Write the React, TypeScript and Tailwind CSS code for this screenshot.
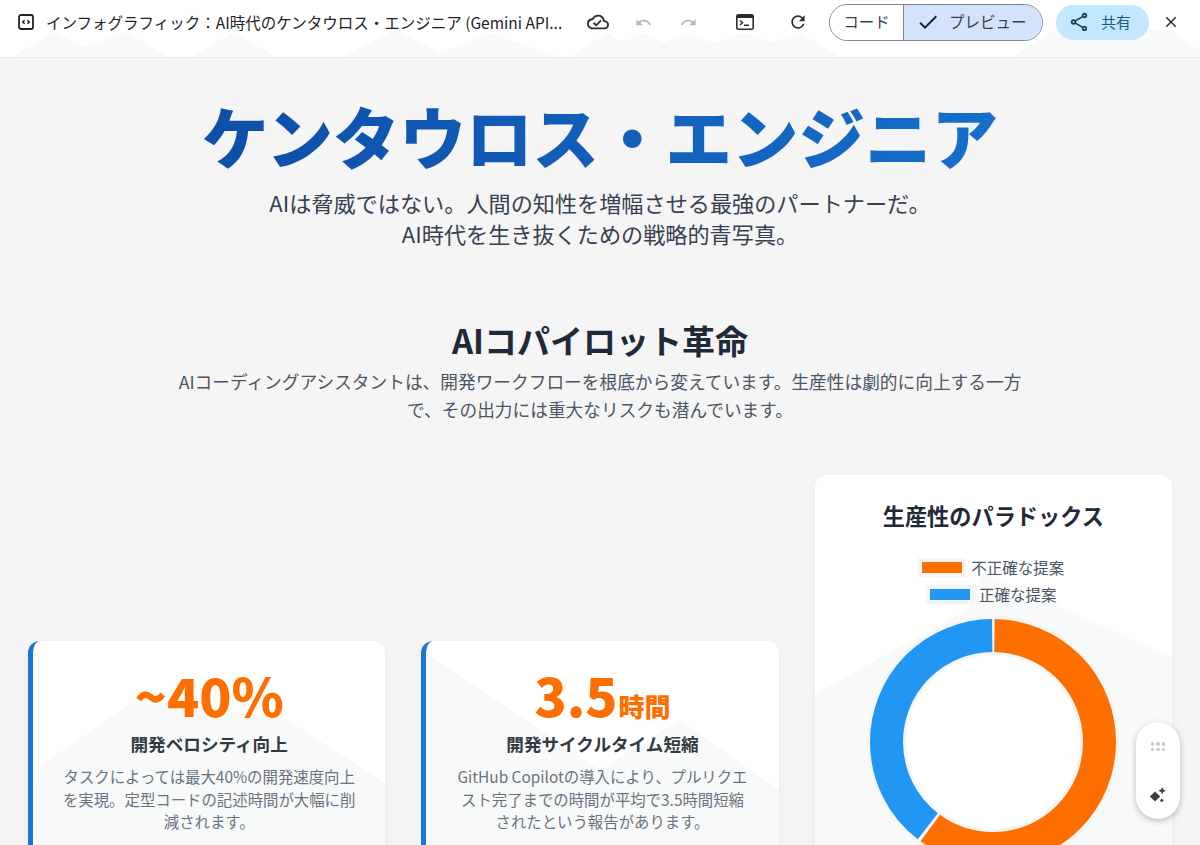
import React from 'react';
import { MdOutlineCloudDone, MdUndo, MdRedo, MdRefresh, MdCheck, MdOutlineShare, MdClose } from 'react-icons/md';

const jp = "font-['Noto_Sans_CJK_JP','Noto_Sans',sans-serif]";

function CodeIcon() {
  return (
    <svg width="18" height="18" viewBox="0 0 18 18" fill="none" stroke="#1f2328">
      <rect x="2" y="2" width="14" height="14" rx="2" strokeWidth="1.8" />
      <path d="M7.6 7.2 5.8 9l1.8 1.8M10.4 7.2 12.2 9l-1.8 1.8" strokeWidth="1.5" />
    </svg>
  );
}

function TerminalIcon() {
  return (
    <svg width="18" height="16" viewBox="0 0 18 16" fill="none">
      <rect x="0.8" y="0.8" width="16.4" height="14.4" rx="1.5" stroke="#2a2e33" strokeWidth="1.6" />
      <rect x="1" y="1" width="16" height="3" fill="#2a2e33" />
      <path d="m4 6.5 2.5 2.2L4 11M8 11.2h5" stroke="#2a2e33" strokeWidth="1.4" />
    </svg>
  );
}

function Sparkles() {
  return (
    <svg width="20" height="20" viewBox="0 0 20 20" fill="#3c4043">
      <path d="M7 5.5 12.2 10.5 7 15.6 1.8 10.5Z" />
      <path d="M14.2 1 15.3 3.6 18 4.8 15.3 6 14.2 8.6 13.1 6 10.4 4.8 13.1 3.6Z" />
      <path d="M13.8 12.5 15.7 14.4 13.8 16.3 11.9 14.4Z" />
    </svg>
  );
}

function Watermark({ points }: { points: string[] }) {
  return (
    <svg className="absolute inset-0 w-full h-full" preserveAspectRatio="none">
      {points.map((p) => (
        <polygon key={p} points={p} fill="#f8f9f9" />
      ))}
    </svg>
  );
}

function TopBar() {
  return (
    <header className="relative h-[58px] shrink-0 bg-white border-b border-[#ebebeb]">
      <Watermark
        points={[
          '12,57 54,32 85,47 126,32 169,57',
          '192,57 234,32 276,57',
          '341,57 395,30 441,53 490,33 559,57',
          '570,57 606,33 622,42 642,33 664,43 686,33 713,43 743,33 773,42 801,33 839,57',
          '1012,57 1060,27 1168,30 1200,50 1200,57',
        ]}
      />
      <div className={`relative flex items-center h-[44px] pl-[17px] pr-[19px] ${jp}`}>
        <CodeIcon />
        <span className="ml-[11px] w-[519px] text-[15.5px] leading-[20px] -mt-[1px] text-[#1f2328] whitespace-nowrap overflow-hidden">
          インフォグラフィック：AI時代のケンタウロス・エンジニア (Gemini API...
        </span>
        <MdOutlineCloudDone className="ml-[22px] text-[22px] text-[#2a2e33]" />
        <MdUndo className="ml-[26px] text-[17px] text-[#b4b6b8]" />
        <MdRedo className="ml-[28px] text-[17px] text-[#b4b6b8]" />
        <span className="ml-[39px]"><TerminalIcon /></span>
        <MdRefresh className="ml-[34px] text-[20px] text-[#2a2e33]" />
        <div className="ml-[21px] flex h-[37px] w-[214px] rounded-full border border-[#80868b] overflow-hidden text-[15.5px] text-[#3c4043]">
          <div className="w-[74px] bg-white flex items-center justify-center border-r border-[#80868b]">コード</div>
          <div className="flex-1 bg-[#d3e3fd] flex items-center pl-[12px]">
            <MdCheck className="text-[24px] text-[#1f2328]" />
            <span className="ml-[9px]">プレビュー</span>
          </div>
        </div>
        <div className="ml-[13px] flex items-center h-[35px] w-[93px] rounded-full bg-[#c2e7ff] pl-[12px] text-[15px] text-[#1a5a8a]">
          <MdOutlineShare className="text-[22px] text-[#0b3f66]" />
          <span className="ml-[11px]">共有</span>
        </div>
        <MdClose className="ml-[13px] text-[18px] text-[#2a2e33]" />
      </div>
    </header>
  );
}

function StatCard({ stat, unit, title, lines, mark }: { stat: string; unit?: string; title: string; lines: string; mark: string[] }) {
  return (
    <div className="relative mt-[166px] h-[300px] rounded-xl bg-white border-l-[5px] border-[#1976d2] shadow-[0_4px_12px_rgba(0,0,0,0.05)] overflow-hidden px-[24px] pt-[21px] text-center">
      <Watermark points={mark} />
      <div className="relative">
        <div className="h-[64px] text-[53px] leading-[64px] font-black text-[#ff6f00]">
          {stat}
          {unit && <span className="ml-[1px] text-[26px] leading-none font-black">{unit}</span>}
        </div>
        <h3 className="mt-[4px] text-[17.6px] leading-[28px] font-bold text-[#333a42]">{title}</h3>
        <p className="mt-[7px] text-[15.4px] leading-[22.5px] text-[#6b7280] whitespace-pre-line">{lines}</p>
      </div>
    </div>
  );
}

function Donut() {
  const r = 106.5;
  const c = 2 * Math.PI * r;
  const orange = 0.602;
  return (
    <svg width="260" height="260" viewBox="0 0 260 260" className="mx-auto mt-[4px]">
      <circle cx="130" cy="130" r="90" fill="#ffffff" />
      <g transform="rotate(-90 130 130)" fill="none">
        <circle cx="130" cy="130" r={r} stroke="#f5f5f5" strokeWidth="39" />
        <circle cx="130" cy="130" r={r} stroke="#ff6f00" strokeWidth="33" strokeDasharray={`${c * orange - 3} ${c}`} strokeDashoffset="-1.5" />
        <circle cx="130" cy="130" r={r} stroke="#2196f3" strokeWidth="33" strokeDasharray={`${c * (1 - orange) - 3} ${c}`} strokeDashoffset={-(c * orange + 1.5)} />
      </g>
    </svg>
  );
}

export default function App() {
  return (
    <div className={`relative flex flex-col h-[845px] w-[1200px] overflow-hidden bg-[#f5f5f5] ${jp}`}>
      <TopBar />
      <main className="px-[28px] text-center">
        <h1 className="mt-[37px] text-[66.5px] leading-[80px] font-black bg-gradient-to-r from-[#0d47a1] to-[#1976d2] bg-clip-text text-transparent">
          ケンタウロス・エンジニア
        </h1>
        <p className="mt-[12px] text-[22.15px] leading-[31px] text-[#374151]">
          AIは脅威ではない。人間の知性を増幅させる最強のパートナーだ。
          <br />
          AI時代を生き抜くための戦略的青写真。
        </p>
        <h2 className="mt-[71px] text-[33px] leading-[40px] font-bold text-[#1f2937]">AIコパイロット革命</h2>
        <p className="mx-auto mt-[7px] w-[856px] text-[17.7px] leading-[28px] text-[#4b5563]">
          AIコーディングアシスタントは、開発ワークフローを根底から変えています。生産性は劇的に向上する一方で、その出力には重大なリスクも潜んでいます。
        </p>
        <div className="mt-[52px] grid grid-cols-3 gap-[36px] items-start">
          <StatCard
            stat="~40%"
            title="開発ベロシティ向上"
            lines="タスクによっては最大40%の開発速度向上を実現。定型コードの記述時間が大幅に削減されます。"
            mark={['4,127 100,61 250,76 352,142 352,300 0,300']}
          />
          <StatCard
            stat="3.5"
            unit="時間"
            title="開発サイクルタイム短縮"
            lines={'GitHub Copilotの導入により、プルリクエ\nスト完了までの時間が平均で3.5時間短縮\nされたという報告があります。'}
            mark={['0,12 174,129 254,79 353,149 353,300 0,300']}
          />
          <div className="relative h-[500px] rounded-xl bg-white shadow-[0_4px_12px_rgba(0,0,0,0.05)] overflow-hidden pt-[22px]">
            <Watermark points={['168,98 357,182 357,500 0,500 0,219 152,135']} />
            <div className="relative">
              <h3 className="text-[22.2px] leading-[36px] font-bold text-[#1f2937]">生産性のパラドックス</h3>
              <div className="mt-[21px] flex flex-col items-center text-[15.5px] leading-[27px] text-[#4b5563]">
                <div className="flex items-center">
                  <span className="mr-[9px] h-[11px] w-[40px] bg-[#ff6f00] outline-[4px] outline-[#f5f5f5]" />
                  不正確な提案
                </div>
                <div className="flex items-center">
                  <span className="mr-[9px] h-[11px] w-[40px] bg-[#2196f3] outline-[4px] outline-[#f5f5f5]" />
                  正確な提案
                </div>
              </div>
              <Donut />
            </div>
          </div>
        </div>
      </main>
      <div className="absolute left-[1136px] top-[722px] flex h-[97px] w-[44px] flex-col items-center justify-between rounded-full bg-white pt-[20px] pb-[13px] shadow-[0_2px_6px_rgba(0,0,0,0.25)]">
        <div className="grid grid-cols-3 gap-[2px]">
          {[0, 1, 2, 3, 4, 5].map((i) => (
            <span key={i} className="h-[3.5px] w-[3.5px] rounded-full bg-[#c8cacc]" />
          ))}
        </div>
        <Sparkles />
      </div>
    </div>
  );
}
